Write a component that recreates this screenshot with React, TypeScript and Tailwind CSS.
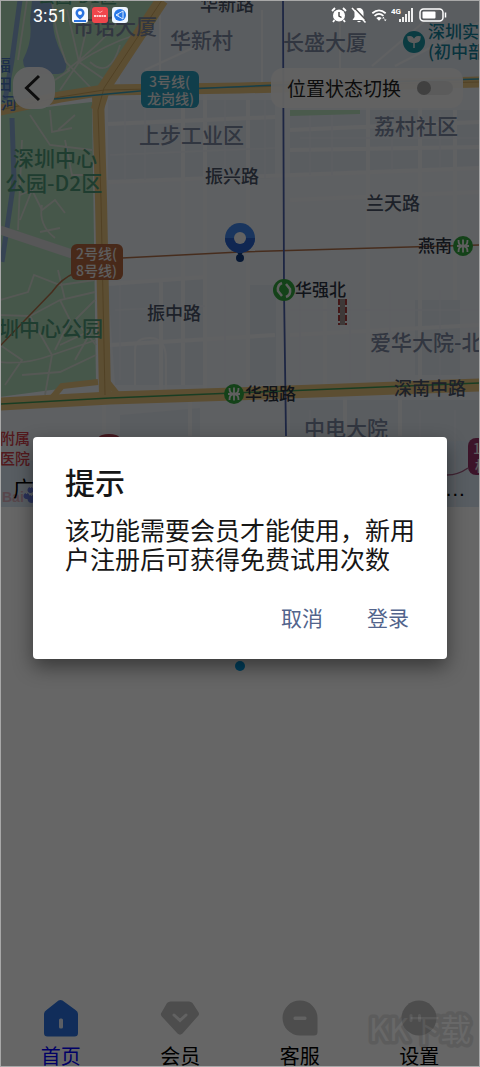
import type { ReactNode } from 'react'

const stations = [
  { name: '燕南', x: 463, y: 246, textX: 418, textY: 252 },
  { name: '华强路', x: 234, y: 394, textX: 245, textY: 400 },
]

const places = [
  { name: '公园-D1区', x: 38, y: 3, size: 17, color: '#4f9a78' },
  { name: '华新路', x: 200, y: 11, size: 18, color: '#4a5468' },
  { name: '市话大厦', x: 73, y: 34, size: 21, color: '#7c87a0' },
  { name: '华新村', x: 170, y: 48, size: 21, color: '#7c87a0' },
  { name: '长盛大厦', x: 283, y: 50, size: 21, color: '#7c87a0' },
  { name: '上步工业区', x: 139, y: 143, size: 21, color: '#7c87a0' },
  { name: '荔村社区', x: 374, y: 134, size: 21, color: '#7c87a0' },
  { name: '爱华大院-北', x: 370, y: 350, size: 21, color: '#7c87a0' },
  { name: '中电大院', x: 304, y: 436, size: 21, color: '#7c87a0' },
  { name: '振兴路', x: 205, y: 183, size: 18, color: '#4a5468' },
  { name: '兰天路', x: 366, y: 210, size: 18, color: '#4a5468' },
  { name: '振中路', x: 147, y: 320, size: 18, color: '#4a5468' },
  { name: '深南中路', x: 394, y: 395, size: 18, color: '#4a5468' },
  { name: '深圳中心', x: 13, y: 166, size: 21, color: '#4f9a78' },
  { name: '公园-D2区', x: 5, y: 191, size: 21, color: '#4f9a78' },
  { name: '圳中心公园', x: -2, y: 336, size: 21, color: '#4f9a78' },
  { name: '深圳实', x: 428, y: 38, size: 17, color: '#158099' },
  { name: '(初中部', x: 428, y: 58, size: 17, color: '#158099' },
  { name: '附属', x: 0, y: 444, size: 15, color: '#d0404a' },
  { name: '医院', x: 0, y: 464, size: 15, color: '#d0404a' },
  { name: '福', x: -5, y: 71, size: 16, color: '#4a74b8' },
  { name: '田', x: -4, y: 90, size: 16, color: '#4a74b8' },
  { name: '河', x: 1, y: 109, size: 16, color: '#4a74b8' },
]

const tabs: { label: string; icon: ReactNode; active?: boolean }[] = [
  {
    label: '首页',
    active: true,
    icon: (
      <>
        <path d="M17.500 2.500a4 4 0 0 1 4 0L34.500 12q2.500 1.600 2.500 4V35a3.500 3.500 0 0 1-3.500 3.500H6.500A3.500 3.500 0 0 1 3 35V16q0-2.400 2.500-4z" fill="#2b72e0" />
        <rect x="18" y="20.500" width="4" height="10" rx="1.500" fill="#e4ecfb" />
      </>
    ),
  },
  {
    label: '会员',
    icon: (
      <>
        <path d="M10.500 3.500h18.500q2 0 3.500 1.500l5.500 8.500q2 2.500 0 4.500L22.500 35.500q-2.500 2.300-5 0L1.800 18.500q-2-2.200 0-4.500L7 5q1.500-1.500 3.500-1.500z" fill="#c0c0c0" />
        <path d="M14 17l6 5.500 6-5.500" fill="none" stroke="#f4f4f4" strokeWidth="3" strokeLinecap="round" />
      </>
    ),
  },
  {
    label: '客服',
    icon: (
      <>
        <path d="M20 2.500A17.500 17.500 0 0 1 37.500 20v14a3.500 3.500 0 0 1-3.500 3.500H20a17.500 17.500 0 0 1 0-35z" fill="#c0c0c0" />
        <rect x="13.500" y="18.500" width="13" height="3.500" rx="1.500" fill="#f4f4f4" />
      </>
    ),
  },
  {
    label: '设置',
    icon: (
      <>
        <circle cx="20" cy="20" r="17.500" fill="#c0c0c0" />
        <path d="M12 17.500v5M20.500 17.500v5" stroke="#f4f4f4" strokeWidth="3" strokeLinecap="round" />
      </>
    ),
  },
]

function MetroMark({ x, y }: { x: number; y: number }) {
  return (
    <g transform={`translate(${x} ${y})`}>
      <circle r="10" fill="#33a63f" />
      <path d="M-4.500-6q0 5 2.800 5.500V.5Q-4.500 1-4.500 6M4.500-6q0 5-2.800 5.500V.5Q4.500 1 4.500 6M0-6.500V6.500M-6 0H6" fill="none" stroke="#eee" strokeWidth="1.800" />
    </g>
  )
}

function CityMap() {
  return (
    <svg
      className="absolute inset-0 h-full w-full"
      viewBox="1 1 478 506"
      preserveAspectRatio="xMidYMid slice"
      fontFamily='"Noto Sans CJK SC", sans-serif'
    >
      <rect width="480" height="507" fill="#eceff4" />
      {/* blocks */}
      <g fill="#e2e9f1">
        <path d="M150 0H480V80L120 88V70z" />
        <path d="M108 100H275V178L108 183zM290 110H480V168L290 176z" />
        <path d="M108 285L205 279V385H115zM250 285H276V385H250z" />
        <path d="M120 415L200 408V436H120zM415 300H460V375H415zM290 400H480V507H290z" />
      </g>
      <path d="M0 462L480 440V507H0z" fill="#dde8f4" />
      <g fill="none" stroke="#f0f2f5" strokeWidth="4">
        <path d="M108 182L480 168M108 124L275 117M108 284L205 277M183 95V385M161 280V390M205 95V390M248 100V385M368 95V380M420 100V380M455 110V300M325 285V385M290 130L480 122M290 150L480 147M290 200L480 192M110 345L275 335M290 335L480 325M104 400V436M190 398V436M345 398V436M400 398V436" />
        <path d="M135 385V350q0-12 15-12q16 0 16 22v30M372 66L440 8M395 66L480 22M145 70L210 40M160 15V80M262 10V85M340 10V80" strokeWidth="2" />
      </g>
      <g fill="none" stroke="#e9edf3" strokeWidth="1.500">
        <path d="M125 100V180M145 100V180M225 100V178M265 100V178M310 112V175M332 112V175M392 112V170M440 112V168M110 155L275 148M300 138H480M120 285V380M225 285V380M300 290V380M350 290V380M390 290V380M440 290V380M290 310H480M115 310L205 306M310 410V436M420 410V507M455 410V507" />
      </g>

      {/* parks */}
      <path d="M0 0H155L104 85L0 105z" fill="#aed9b8" />
      <path d="M0 112L92 102L96 384L0 397z" fill="#aed9b8" />
      <path d="M290 110H360V114L290 116z" fill="#b8e0be" />
      <path d="M32 0H52q0 20 2 32t12 30q2 11-8 12H34q-11-3-11-14q10-20 7-38z" fill="#88a8d0" />
      <path d="M20 0L12 60L5 100M12 118L14 180L6 235L2 262" fill="none" stroke="#88a8d0" strokeWidth="5" />
      <g fill="none" stroke="#d6ddd4" strokeWidth="1.800">
        <path d="M27 0L18 60M52 0q2 30 14 62l26 27M67 10L79 62L60 90M92 5L79 62M120 20q-20 25-53 50M79 62L105 80M135 35Q105 45 79 62M90 62Q110 80 120 45M70 70L55 80" />
        <path d="M22 140L18 230M30 115L50 145L92 150M65 140L72 175L95 175M50 110L52 132L72 128M75 115L58 130M20 195L32 190L42 210L55 200L65 213M42 205Q38 225 55 238M32 190L20 220M60 228L40 232" />
        <path d="M0 300L28 292L34 275L60 285L95 280M0 315L30 316L52 355L45 395M30 316L60 300L95 292M52 355L96 340M52 355Q25 365 0 362M60 300L70 320L55 350M75 360L92 330L60 345M0 345L22 360L5 385M65 300L58 270M95 300L75 320L96 345M22 375L60 372L96 355" />
      </g>
      <path d="M0 230L72 254" fill="none" stroke="#d9d9dc" strokeWidth="9" />

      {/* main roads */}
      <g fill="none" stroke="#e6c27e">
        <path d="M0 110L60 97L104 90L240 88L480 82" strokeWidth="11" />
        <path d="M162 0L104 88L97 110" strokeWidth="13" />
        <path d="M98 95L101 200L105 395" strokeWidth="12" />
        <path d="M0 404L110 398L234 394L480 385" strokeWidth="13" />
        <path d="M52 398L62 386L98 382M106 380L118 395" strokeWidth="6" />
      </g>
      <path d="M162 0L104 88L98 110L101 200L105 395M0 110L60 97L104 90L480 82" fill="none" stroke="#c9a35c" strokeWidth="1" />

      {/* metro lines */}
      <g fill="none">
        <path d="M54 99L140 91L276 85L480 79" stroke="#3a9fb8" strokeWidth="1.500" />
        <path d="M0 404L110 398L234 393L480 383" stroke="#3f9a58" strokeWidth="1.500" />
        <path d="M0 346L52 292Q62 278 75 273M122 258L240 252L480 245" stroke="#b0704a" strokeWidth="1.500" />
        <path d="M283 0L284 290L286 436" stroke="#4a60a8" strokeWidth="1.800" />
        <path d="M447 475Q458 475 468 468" stroke="#a05a80" strokeWidth="1.500" />
      </g>
      <path d="M339 299V325M346 299V325" stroke="#a83c3c" strokeWidth="2" strokeDasharray="6 2" />
      <rect x="340" y="299" width="5" height="26" fill="#9c8f8c" />
      <ellipse cx="109" cy="437" rx="10" ry="3" fill="#a83c4c" />

      {places.map((p) => (
        <text key={p.name} x={p.x} y={p.y} fontSize={p.size} fill={p.color} fontWeight="500">
          {p.name}
        </text>
      ))}

      <g fontSize="14" fill="#e8e8e8" fontWeight="500">
        <rect x="141" y="71" width="58" height="37" rx="6" fill="#2a9cbc" />
        <text x="149" y="87">3号线(</text>
        <text x="147" y="104">龙岗线)</text>
        <rect x="71" y="244" width="52" height="36" rx="6" fill="#b5673f" />
        <text x="76" y="259">2号线(</text>
        <text x="76" y="276">8号线)</text>
        <rect x="468" y="438" width="30" height="37" rx="8" fill="#963468" />
        <text x="473" y="454">1号</text>
        <text x="475" y="471">机</text>
      </g>

      {stations.map((s) => (
        <g key={s.name}>
          <MetroMark x={s.x} y={s.y} />
          <text x={s.textX} y={s.textY} fontSize="17" fontWeight="500" fill="#2c3442">
            {s.name}
          </text>
        </g>
      ))}
      <circle cx="284" cy="290" r="11" fill="#33a63f" />
      <path d="M282 283q-5 2-4 8l4 5M286 297q5-2 4-8l-4-5" fill="none" stroke="#eee" strokeWidth="2.500" />
      <text x="295" y="296" fontSize="17" fontWeight="500" fill="#2c3442">华强北</text>

      <circle cx="414" cy="42" r="11" fill="#1b93a3" />
      <path d="M414 48V41M414 42q-6 1-6-5q6-1 6 5q0-6 6-5q0 6-6 5" fill="#e8e8e8" stroke="#e8e8e8" strokeWidth="1.500" />

      {/* current position */}
      <circle cx="240" cy="258" r="4" fill="#123c80" />
      <path d="M236 250h8l-4 8z" fill="#123c80" />
      <circle cx="240" cy="238" r="15" fill="#3f86ea" />
      <path d="M225 238a15 15 0 0 0 30 0z" fill="#2a63cc" />
      <ellipse cx="240" cy="238" rx="6" ry="6" fill="#f4f4f4" />

      <text x="2" y="502" fontSize="14" fontWeight="700" fill="#d9b0bc" fontFamily="Liberation Sans, sans-serif">Bai</text>
      <path d="M26 494a2 2 0 1 0 1 0M30 488a2 2 0 1 0 1 0M31 496a3 3 0 1 0 1 0" fill="#6b7fe0" stroke="#6b7fe0" strokeWidth="2" />
    </svg>
  )
}

function StatusBar() {
  return (
    <div className="absolute inset-x-0 top-0 z-30 flex h-7 items-center justify-between px-8 text-white">
      <div className="flex items-center gap-1">
        <span className="font-['Roboto',sans-serif] text-[18px]">3:51</span>
        <svg className="h-4 w-4" viewBox="0 0 16 16">
          <rect width="16" height="16" rx="3" fill="#f5f9ff" />
          <path d="M8 1.500a4.500 4.500 0 0 1 4.500 4.500q0 3-4.500 6.500Q3.500 9 3.500 6A4.500 4.500 0 0 1 8 1.500z" fill="#2c74e0" />
          <circle cx="8" cy="6" r="2" fill="#fff" />
          <path d="M2 14h12" stroke="#2c74e0" strokeWidth="2" />
        </svg>
        <svg className="h-4 w-4" viewBox="0 0 16 16">
          <rect width="16" height="16" rx="3" fill="#f0464c" />
          <path d="M5.500 4q2.500 3 5 0" fill="none" stroke="#ffb0b0" />
          <path d="M2 9h12" stroke="#fff" strokeWidth="1.500" strokeDasharray="2 .5" />
        </svg>
        <svg className="h-4 w-4" viewBox="0 0 16 16">
          <rect width="16" height="16" rx="3" fill="#eef5ff" />
          <circle cx="8" cy="8" r="6" fill="#2878e8" />
          <path d="M4 8l7-4v8zM4 8h3" fill="none" stroke="#dcebff" />
        </svg>
      </div>
      <div className="flex items-center gap-1">
        <svg className="h-4 w-4" viewBox="0 0 16 16">
          <circle cx="8" cy="8.500" r="6" fill="#fff" />
          <path d="M1 4l3-3M15 4l-3-3M3.500 13L2 15M12.500 13l1.500 2" stroke="#fff" strokeWidth="1.800" />
          <path d="M8 5v4l2.500 1.500" fill="none" stroke="#444" strokeWidth="1.400" />
        </svg>
        <svg className="h-4 w-4" viewBox="0 0 16 16">
          <path d="M8 1a4.500 4.500 0 0 1 4.500 5v4l2 3h-13l2-3V6A4.500 4.500 0 0 1 8 1zM6 14h4q-2 2.500-4 0z" fill="#fff" />
          <path d="M2.500 0L16 14" stroke="#555" strokeWidth="1.500" />
          <path d="M1 1l13.500 14.500" stroke="#fff" strokeWidth="1.500" />
        </svg>
        <svg className="h-4 w-4" viewBox="0 0 18 16">
          <path d="M1.500 6q7.500-6.500 15 0M4 9q5-4.500 10 0" fill="none" stroke="#fff" strokeWidth="2" />
          <path d="M6 11.500q3-2.500 6 0l-3 3z" fill="#fff" />
          <path d="M12.500 12l1.500-2 1.500 2zM14.500 13h3l-1.500 2z" fill="#fff" />
        </svg>
        <svg className="h-4 w-6" viewBox="0 0 24 16">
          <text x="0" y="7" fontSize="8" fontWeight="700" fill="#fff" fontFamily="Roboto, sans-serif">4G</text>
          <path d="M9 15v-3M12 15v-5M15 15V7M18 15V4M21 15V1" stroke="#fff" strokeWidth="1.800" />
        </svg>
        <svg className="h-4 w-7" viewBox="0 0 28 16">
          <rect x="1" y="2" width="23" height="12" rx="3.500" fill="none" stroke="#fff" strokeWidth="1.500" />
          <rect x="3.500" y="4.500" width="13" height="7" rx="1" fill="#fff" />
          <path d="M26.500 5.500v5" stroke="#fff" strokeWidth="1.500" />
        </svg>
      </div>
    </div>
  )
}

function TipDialog() {
  return (
    <div className="absolute inset-0 z-20 flex items-center justify-center bg-black/60 px-8 pt-7">
      <div
        role="dialog"
        aria-labelledby="tip-title"
        className="w-full rounded bg-white px-8 pt-6 pb-6 shadow-[0_8px_20px_rgba(0,0,0,0.45)]"
      >
        <h2 id="tip-title" className="text-[30px] leading-10 font-medium text-[#161616]">提示</h2>
        <p className="mt-3.5 text-[25px] leading-[29px] text-[#161616]">
          该功能需要会员才能使用，新用户注册后可获得免费试用次数
        </p>
        <div className="mt-7 mb-0.5 flex justify-end gap-11 pr-1.5 text-[21px] leading-8 text-[#52648c]">
          <button type="button">取消</button>
          <button type="button">登录</button>
        </div>
      </div>
    </div>
  )
}

export default function App() {
  return (
    <div className="relative flex min-h-screen flex-col overflow-hidden border border-[#a8a8a8] bg-white font-['Noto_Sans_CJK_SC',sans-serif]">
      <StatusBar />

      <section className="relative flex h-[506px] shrink-0 flex-col justify-between overflow-hidden">
        <CityMap />
        <div className="relative flex items-center justify-between pt-[66px] pr-4 pl-3">
          <button
            type="button"
            aria-label="返回"
            className="flex h-[42px] w-[42px] items-center justify-center rounded-2xl bg-[#f4f4f4]/95 text-[#222]"
          >
            <svg className="h-7 w-5" viewBox="0 0 20 28" fill="none" stroke="currentColor" strokeWidth="3">
              <path d="M15 2L2.500 14L15 26" />
            </svg>
          </button>
          <label className="flex h-10 items-center gap-4 rounded-xl bg-[#f4f4f4]/95 pr-2.5 pl-4 text-[19px] text-[#222]">
            位置状态切换
            <input
              type="checkbox"
              className="h-3.5 w-9 appearance-none rounded-full bg-[#e4e4e4] before:block before:h-3.5 before:w-3.5 before:rounded-full before:bg-[#a0a0a0]"
            />
          </label>
        </div>
        <p className="relative truncate px-3 pb-1 font-['Liberation_Sans','Noto_Sans_CJK_SC',sans-serif] text-[21px] leading-7 text-black">
          广东省深圳市福田区振华路1号华强北街道燕南路交叉口东北侧
        </p>
      </section>

      <main className="flex flex-1 justify-center pt-[154px]">
        <span className="h-2.5 w-2.5 rounded-full bg-[#009fe8]" />
      </main>

      <nav className="grid grid-cols-4">
        {tabs.map((tab) => (
          <a
            key={tab.label}
            href="#"
            className={`flex flex-col items-center text-[20px] leading-5 ${tab.active ? 'text-[#0000ff]' : 'text-black'}`}
          >
            <svg className="mb-2 h-10 w-10" viewBox="0 0 40 40">{tab.icon}</svg>
            {tab.label}
          </a>
        ))}
      </nav>

      <TipDialog />

      {/* site watermark */}
      <svg className="pointer-events-none absolute right-0 bottom-4 z-30 h-10 w-29 opacity-40" viewBox="0 0 116 40">
        <text
          x="6"
          y="31"
          fontSize="31"
          fontFamily='"Noto Sans CJK SC", sans-serif'
          fill="#6c6c6c"
          stroke="#4f4f4f"
          strokeWidth="7"
          strokeLinejoin="round"
          paintOrder="stroke"
        >
          KK下载
        </text>
      </svg>
    </div>
  )
}
